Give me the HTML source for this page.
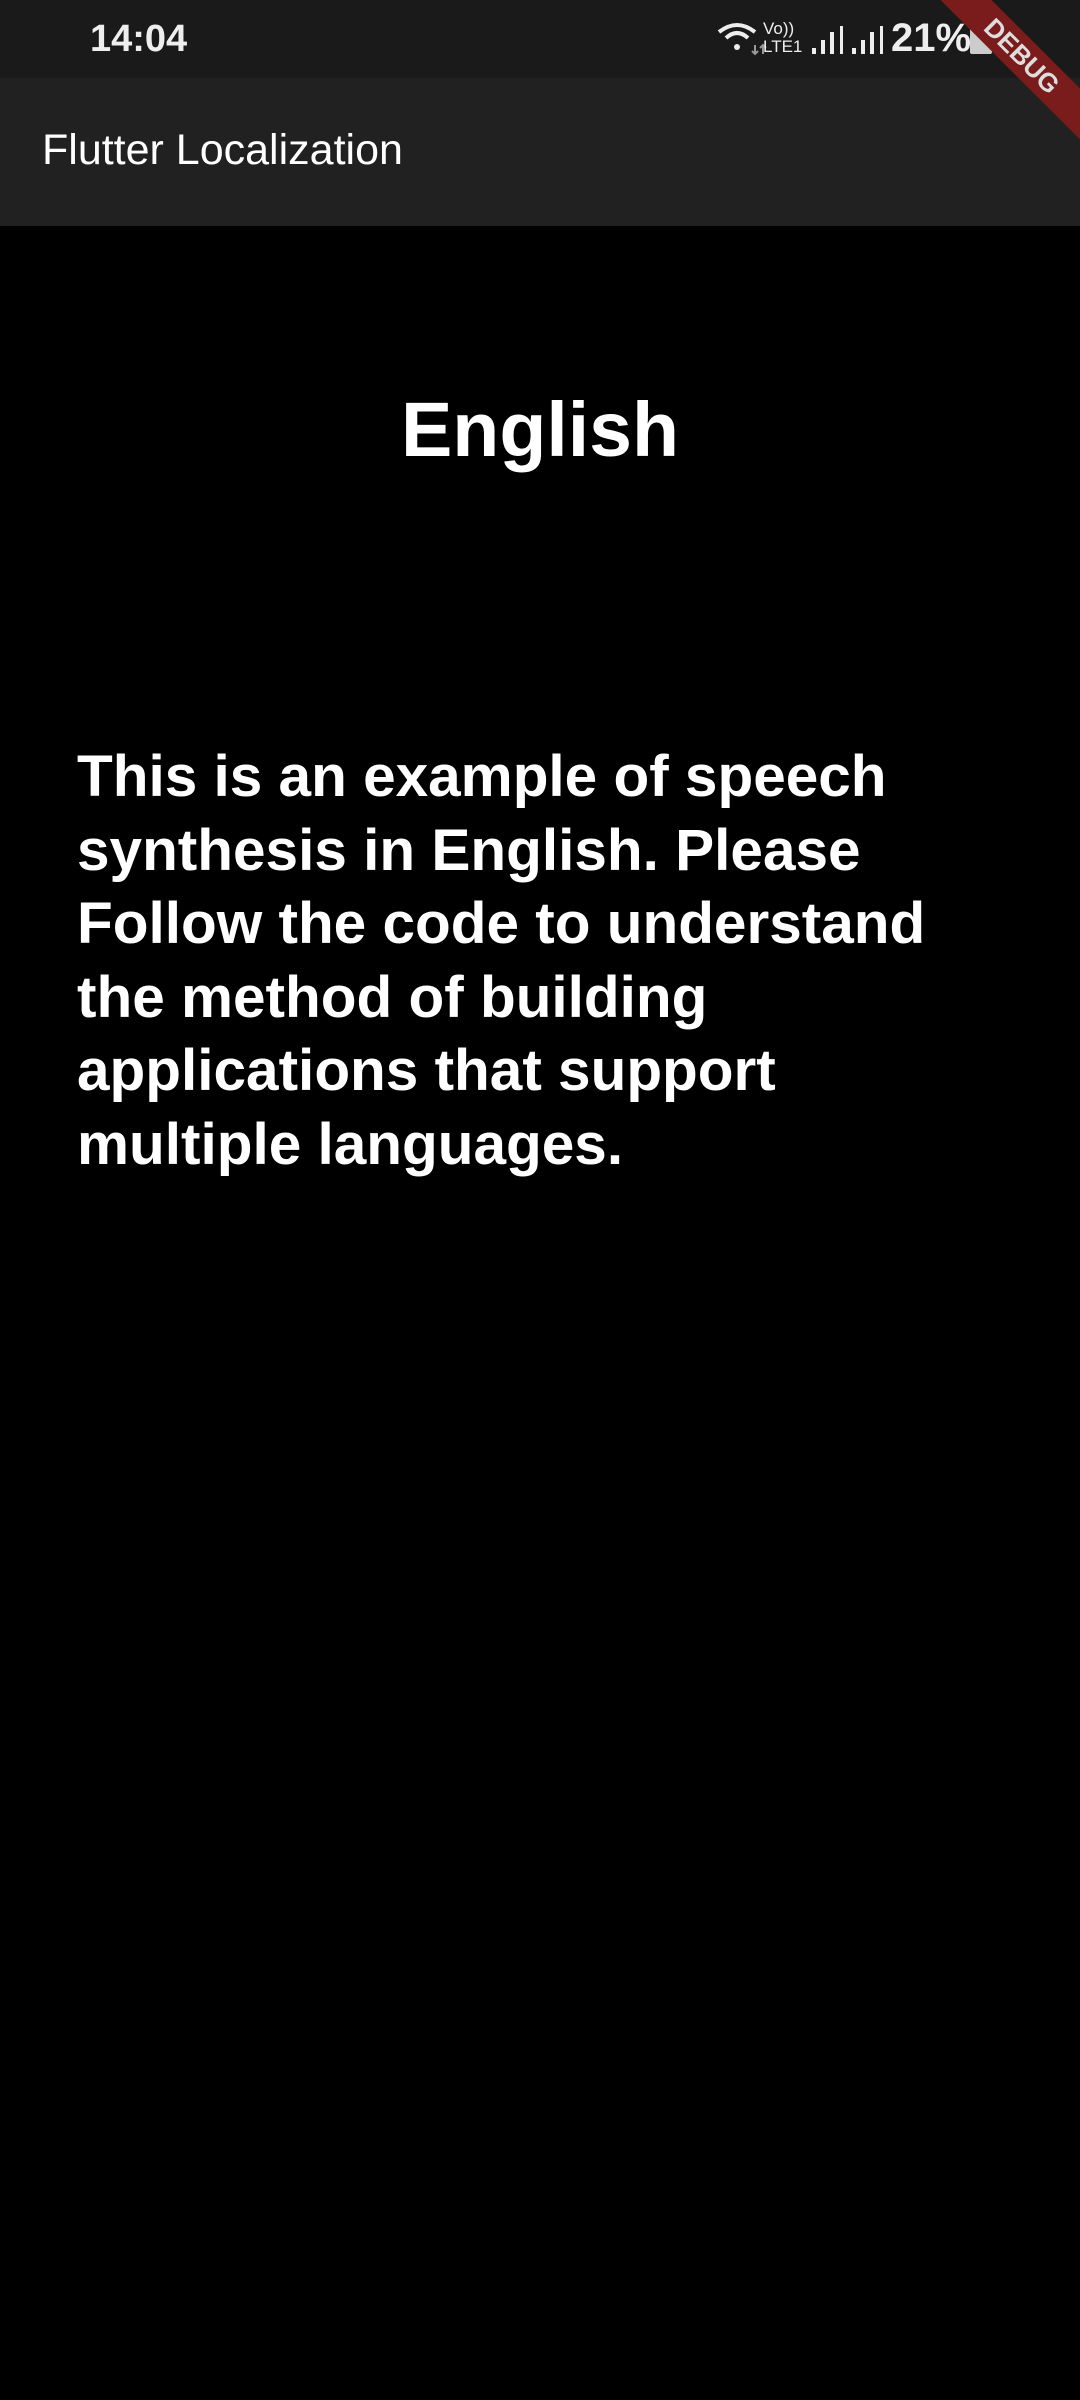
<!DOCTYPE html>
<html><head><style>
body{margin:0;width:1080px;height:2400px;background:#000;overflow:hidden;position:relative;font-family:"Liberation Sans",sans-serif;color:#fff}
.sb{position:absolute;top:0;left:0;width:1080px;height:78px;background:#1a1a1a}
.ab{position:absolute;top:78px;left:0;width:1080px;height:148px;background:#212121}
.t{position:absolute;white-space:nowrap}
</style></head><body>
<div class="sb"></div>
<div class="ab"></div>
<div class="t" style="left:90px;top:18px;font-size:38px;font-weight:bold;color:#eee">14:04</div>
<svg class="t" style="left:715px;top:20px" width="70" height="36" viewBox="0 0 70 36"><path d="M4 12 Q22 -2 40 12" stroke="#eee" stroke-width="4" fill="none"/><path d="M11 18 Q22 8 33 18" stroke="#eee" stroke-width="4" fill="none"/><circle cx="22" cy="27" r="3" fill="#eee"/><path d="M40 25v9M37 31l3 3 3-3M48 34v-9M45 28l3-3 3 3" stroke="#999" stroke-width="2" fill="none"/></svg>
<div class="t" style="left:763px;top:20px;font-size:17px;line-height:18px;color:#eee">Vo))<br>LTE1</div>
<svg class="t" style="left:810px;top:24px" width="90" height="32"><g fill="#eee"><rect x="2" y="24" width="4" height="6"/><rect x="11" y="16" width="4" height="14"/><rect x="20" y="8" width="4" height="22"/><rect x="30" y="2" width="3" height="28"/><rect x="42" y="24" width="4" height="6"/><rect x="51" y="16" width="4" height="14"/><rect x="60" y="8" width="4" height="22"/><rect x="70" y="2" width="3" height="28"/></g></svg>
<div class="t" style="left:891px;top:16px;font-size:40px;font-weight:bold;color:#eee">21%</div>
<div class="t" style="left:970px;top:26px;width:22px;height:28px;background:#ccc;border-radius:2px"></div>
<div class="t" style="right:-82px;top:38px;width:280px;height:36px;background:#7a1c1c;transform:rotate(45deg);font-size:26px;font-weight:bold;text-align:center;line-height:36px;color:#ddd">DEBUG</div>
<div class="t" style="left:42px;top:126px;font-size:43px">Flutter Localization</div>
<div class="t" style="left:0;width:1080px;text-align:center;top:386px;font-size:77px;font-weight:bold">English</div>
<div class="t" style="left:77px;top:740px;font-size:58.5px;font-weight:bold;line-height:73.5px">This is an example of speech<br>synthesis in English. Please<br>Follow the code to understand<br>the method of building<br>applications that support<br>multiple languages.</div>
</body></html>
